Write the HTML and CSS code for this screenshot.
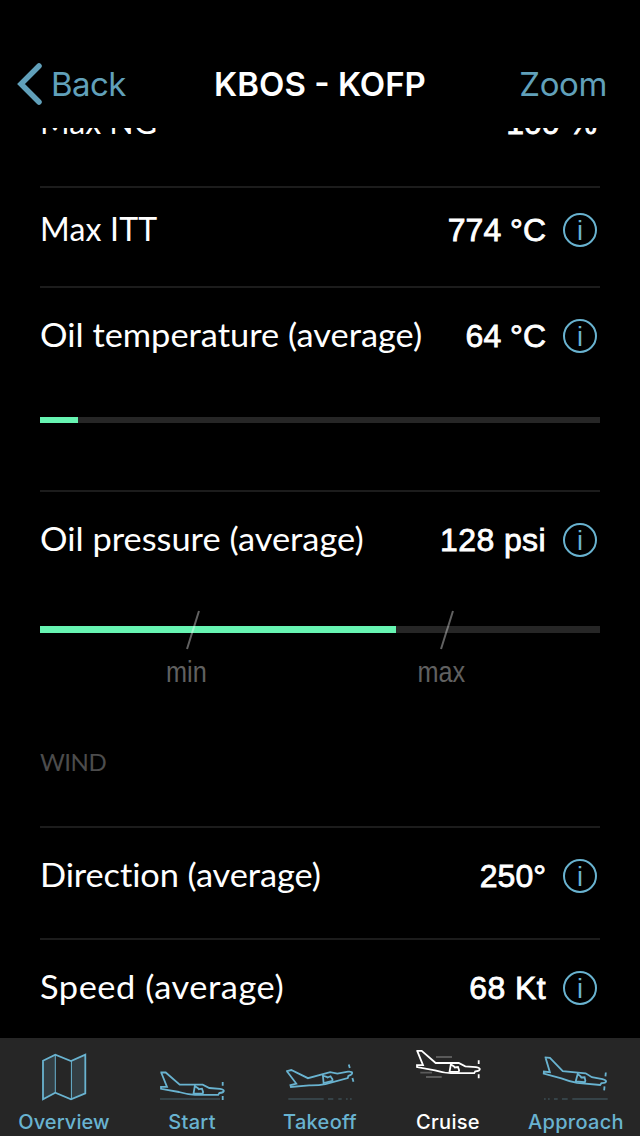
FILE: index.html
```html
<!DOCTYPE html>
<html lang="en">
<head>
    <meta charset="UTF-8">
    <meta name="viewport" content="width=device-width, initial-scale=1.0">
    <title>KBOS - KOFP</title>
    <link rel="stylesheet" href="styles.css">
</head>
<body>
    <!-- plane outline shared by the tab icons -->
    <svg class="defs" width="0" height="0">
        <defs>
            <g id="plane">
                <path d="M32.4 34.5H37.7L51.7 46.7H74.7L81.3 50L92 50.8Q96 51.5 95.8 53Q95.5 54.7 91.3 55L90.2 56.9H67Q60 56.6 51 54L33 50.8V48.8L39 48.9L33.2 34.5"/>
                <path d="M67 47L65.4 56.4M67 48.3L70 50.2L70.8 51.2L74 50.7L75.1 54L74.7 55.6H65.5"/>
                <path d="M94.7 44V47.8M94.7 58V62"/>
            </g>
        </defs>
    </svg>

    <header class="header">
        <a class="back">
            <svg width="26" height="44" viewBox="0 0 26 44"><path d="M22 4L4 22L22 40"/></svg>
            <span>Back</span>
        </a>
        <h1>KBOS - KOFP</h1>
        <a class="zoom">Zoom</a>
    </header>

    <main class="content">
        <div class="row row-ng">
            <span class="label label-ng">Max NG</span>
            <span class="value">100 %</span>
        </div>
        <div class="row row-itt">
            <span class="label label-itt">Max ITT</span>
            <span class="value">774 °C</span>
            <span class="info">i</span>
        </div>
        <div class="block block-temp">
            <div class="row">
                <span class="label label-wide">Oil temperature (average)</span>
                <span class="value">64 °C</span>
                <span class="info">i</span>
            </div>
            <div class="bar bar-thin"><div class="fill" style="width: 6.7%"></div></div>
        </div>
        <div class="block block-pressure">
            <div class="row">
                <span class="label label-wide">Oil pressure (average)</span>
                <span class="value value-psi">128 psi</span>
                <span class="info">i</span>
            </div>
            <div class="bar">
                <div class="fill" style="width: 63.6%"></div>
                <div class="mark" style="left: 26.2%"><svg width="14" height="40"><path d="M1 39L13 1"/></svg><span>min</span></div>
                <div class="mark" style="left: 71.6%"><svg width="14" height="40"><path d="M1 39L13 1"/></svg><span>max</span></div>
            </div>
        </div>
        <h2>WIND</h2>
        <div class="row row-wind">
            <span class="label label-wide label-direction">Direction (average)</span>
            <span class="value">250°</span>
            <span class="info">i</span>
        </div>
        <div class="row row-wind">
            <span class="label label-wide label-speed">Speed (average)</span>
            <span class="value value-psi">68 Kt</span>
            <span class="info">i</span>
        </div>
    </main>

    <nav class="tabs">
        <a class="tab tab-overview">
            <svg viewBox="0 0 128 70">
                <path class="fold" d="M43 22.7L55.3 16.7V54.7L43 61.3ZM71 23L85.7 16V55.3L71 61.3Z"/>
                <path class="crease" d="M55.3 16.7V54.7M71.4 23V61.3"/>
                <path d="M43 22.7L55.3 16.7L71 23L85.3 16.6V55.3L71 61.3L55.3 54.7L43 61.3Z"/>
            </svg>
            <span>Overview</span>
        </a>
        <a class="tab">
            <svg viewBox="0 0 128 70">
                <path class="ground" d="M32 61H92"/>
                <use href="#plane"/>
            </svg>
            <span>Start</span>
        </a>
        <a class="tab">
            <svg viewBox="0 0 128 70">
                <path class="ground" d="M32.3 61H67.7M72 61H77.3M82.3 61H85.7M90 61H91.7M94 61H95.7"/>
                <use href="#plane" transform="translate(.3 -18.2) rotate(-15 96 52.7)"/>
            </svg>
            <span>Takeoff</span>
        </a>
        <a class="tab active">
            <svg viewBox="0 0 128 70">
                <path class="ground" d="M52 19H68M36.3 34.7H48M42 39H57.7"/>
                <use href="#plane" transform="translate(0 -21.7)"/>
            </svg>
            <span>Cruise</span>
        </a>
        <a class="tab">
            <svg viewBox="0 0 128 70">
                <path class="ground" d="M32 61H33.7M36 61H37.7M42 61H45.7M50 61H55.7M60.3 61H95.7"/>
                <use href="#plane" transform="translate(-1.7 -9.4) rotate(5.3 96 52.7)"/>
            </svg>
            <span>Approach</span>
        </a>
    </nav>
</body>
</html>
```

FILE: styles.css
```css
* {
    box-sizing: border-box;
}
body {
    margin: 0;
    width: 640px;
    height: 1136px;
    overflow: hidden;
    background: #000;
    color: #fff;
    display: flex;
    flex-direction: column;
}
.defs {
    position: absolute;
}
svg {
    display: block;
    fill: none;
}
.header {
    height: 128px;
    padding: 40px 17px 0;
    display: grid;
    grid-template-columns: 1fr auto 1fr;
    align-items: center;
    font-family: Inter, sans-serif;
    font-size: 33px;
}
.back {
    display: flex;
    align-items: center;
    gap: 8px;
    color: #61a0ba;
    letter-spacing: -0.6px;
}
.back svg {
    stroke: #61a0ba;
    stroke-width: 5.5;
    stroke-linecap: round;
}
h1 {
    margin: 0;
    font-size: 33px;
    font-weight: 600;
}
.zoom {
    padding-right: 16px;
    color: #61a0ba;
    letter-spacing: -0.4px;
    text-align: right;
}
/* scrolled list, first row is cut by the header */
.content {
    flex: 1;
    overflow: hidden;
    padding: 0 40px;
}
.row {
    display: flex;
    align-items: center;
    height: 96px;
}
.label {
    flex: 1;
    padding-bottom: 2px;
    font-family: Lato, sans-serif;
    font-size: 32px;
    line-height: 40px;
    white-space: nowrap;
}
.label-itt {
    letter-spacing: 0.2px;
}
.label-wide {
    transform: scaleX(1.075);
    transform-origin: left;
    font-variant-ligatures: none;
}
.label-direction {
    letter-spacing: -0.1px;
}
.label-speed {
    letter-spacing: 0.5px;
}
.value {
    font-family: "Liberation Sans", sans-serif;
    font-size: 32px;
    line-height: 40px;
    -webkit-text-stroke: 0.8px #fff;
}
.value-psi {
    letter-spacing: 0.4px;
}
.info {
    width: 34px;
    height: 34px;
    margin: 0 3px 0 17px;
    border: 2px solid #69b3d0;
    border-radius: 50%;
    color: #69b3d0;
    font-family: "Liberation Sans", sans-serif;
    font-size: 27px;
    line-height: 32px;
    text-align: center;
}
.row-ng {
    margin-top: -46px;
    height: 104px;
    padding-right: 3px;
    align-items: flex-start;
}
.row-ng .label {
    margin-top: 20px;
}
.row-ng .value {
    margin-top: 21px;
}
.row-itt {
    height: 100px;
    padding-bottom: 14px;
    border-top: 2px solid #1c1c1c;
}
.block {
    border-top: 2px solid #1c1c1c;
}
.block-temp {
    height: 204px;
}
.block-pressure {
    height: 246px;
}
.bar {
    position: relative;
    height: 7px;
    margin-top: 38px;
    background: #262626;
}
.bar-thin {
    height: 6px;
    margin-top: 33px;
}
.fill {
    height: 100%;
    background: #67f4b2;
}
/* limit mark drawn over the bar */
.mark {
    position: absolute;
    top: -16px;
    width: 60px;
    margin-left: -30px;
    display: flex;
    flex-direction: column;
    align-items: center;
    font-family: "Liberation Sans", sans-serif;
    font-size: 29px;
    line-height: 32px;
    color: #606060;
}
.mark svg {
    margin-left: 13px;
    stroke: rgba(255, 255, 255, 0.38);
    stroke-width: 2;
}
.mark span {
    margin-top: 6px;
    transform: scaleX(0.87);
}
h2 {
    margin: 0;
    height: 90px;
    padding-top: 11px;
    font-family: Lato, sans-serif;
    font-size: 24px;
    font-weight: 400;
    line-height: 30px;
    letter-spacing: -0.5px;
    color: #4c4c4c;
}
.row-wind {
    height: 112px;
    padding-bottom: 14px;
    border-top: 2px solid #1c1c1c;
}
.tabs {
    display: flex;
    height: 98px;
    background: #262626;
}
.tab {
    width: 128px;
    color: #69b3d0;
    font-family: Inter, sans-serif;
    font-size: 20px;
    font-weight: 500;
    line-height: 28px;
    letter-spacing: 0.3px;
    text-align: center;
}
.tab-overview {
    letter-spacing: 0.1px;
}
.tab svg {
    width: 128px;
    height: 70px;
    stroke: #69b3d0;
    stroke-width: 1.8;
}
.tab .fold {
    fill: #333e43;
    stroke: none;
}
.tab .crease {
    stroke-width: 1;
}
.tab .ground {
    stroke: #364348;
}
.active {
    color: #fff;
}
.active svg {
    stroke: #fff;
}
.active .ground {
    stroke: #5a5a5a;
}
```
